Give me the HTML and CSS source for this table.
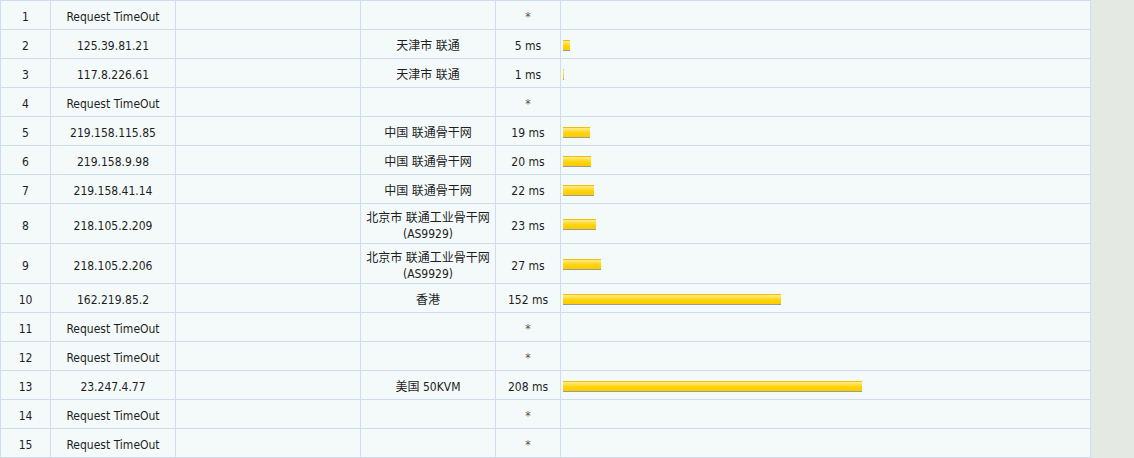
FILE: index.html
```html
<!DOCTYPE html>
<html>
<head>
<meta charset="utf-8">
<link rel="stylesheet" href="styles.css">
</head>
<body>
<table class="trace">
<colgroup>
<col class="c-no"><col class="c-ip"><col class="c-host"><col class="c-loc"><col class="c-time"><col class="c-bar">
</colgroup>
<tbody>
<tr><td>1</td><td>Request TimeOut</td><td></td><td></td><td class="star">*</td><td class="bar-cell"></td></tr>
<tr><td>2</td><td>125.39.81.21</td><td></td><td>天津市 联通</td><td>5 ms</td><td class="bar-cell"><span class="bar" style="width:7px"></span></td></tr>
<tr><td>3</td><td>117.8.226.61</td><td></td><td>天津市 联通</td><td>1 ms</td><td class="bar-cell"><span class="bar" style="width:1px"></span></td></tr>
<tr><td>4</td><td>Request TimeOut</td><td></td><td></td><td class="star">*</td><td class="bar-cell"></td></tr>
<tr><td>5</td><td>219.158.115.85</td><td></td><td>中国 联通骨干网</td><td>19 ms</td><td class="bar-cell"><span class="bar" style="width:27px"></span></td></tr>
<tr><td>6</td><td>219.158.9.98</td><td></td><td>中国 联通骨干网</td><td>20 ms</td><td class="bar-cell"><span class="bar" style="width:28px"></span></td></tr>
<tr><td>7</td><td>219.158.41.14</td><td></td><td>中国 联通骨干网</td><td>22 ms</td><td class="bar-cell"><span class="bar" style="width:31px"></span></td></tr>
<tr class="tall"><td>8</td><td>218.105.2.209</td><td></td><td>北京市 联通工业骨干网<br>(AS9929)</td><td>23 ms</td><td class="bar-cell"><span class="bar" style="width:33px"></span></td></tr>
<tr class="tall"><td>9</td><td>218.105.2.206</td><td></td><td>北京市 联通工业骨干网<br>(AS9929)</td><td>27 ms</td><td class="bar-cell"><span class="bar" style="width:38px"></span></td></tr>
<tr><td>10</td><td>162.219.85.2</td><td></td><td>香港</td><td>152 ms</td><td class="bar-cell"><span class="bar" style="width:218px"></span></td></tr>
<tr><td>11</td><td>Request TimeOut</td><td></td><td></td><td class="star">*</td><td class="bar-cell"></td></tr>
<tr><td>12</td><td>Request TimeOut</td><td></td><td></td><td class="star">*</td><td class="bar-cell"></td></tr>
<tr><td>13</td><td>23.247.4.77</td><td></td><td>美国 50KVM</td><td>208 ms</td><td class="bar-cell"><span class="bar" style="width:299px"></span></td></tr>
<tr><td>14</td><td>Request TimeOut</td><td></td><td></td><td class="star">*</td><td class="bar-cell"></td></tr>
<tr><td>15</td><td>Request TimeOut</td><td></td><td></td><td class="star">*</td><td class="bar-cell"></td></tr>
</tbody>
</table>
</body>
</html>
```

FILE: styles.css
```css
html, body {
  margin: 0;
  padding: 0;
  background: #e4e9e3;
}

.trace {
  border-collapse: collapse;
  table-layout: fixed;
  width: 1091px;
  background: #f4fafa;
  font-family: "DejaVu Sans Condensed", "DejaVu Sans", "Noto Sans CJK SC", sans-serif;
  font-size: 12px;
  color: #1e1e1e;
}

.c-no { width: 50px; }
.c-ip { width: 125px; }
.c-host { width: 185px; }
.c-loc { width: 135px; }
.c-time { width: 65px; }
.c-bar { width: 530px; }

.trace td {
  border: 1px solid #cfdbee;
  text-align: center;
  vertical-align: middle;
  height: 29px;
  line-height: 16px;
  padding: 4px 0 0;
  box-sizing: border-box;
  white-space: nowrap;
}

.trace tr.tall td {
  height: 40px;
}

.trace td.star {
  color: #555;
}

.trace td.bar-cell {
  text-align: left;
  padding: 2px 0 0 2px;
  font-size: 0;
  line-height: 0;
}

.bar {
  display: inline-block;
  height: 9px;
  border-top: 1px solid #f0c000;
  border-bottom: 1px solid #9a9a9a;
  background: linear-gradient(#ffec8c, #ffd200 60%, #ffcc00);
  vertical-align: middle;
}
```
